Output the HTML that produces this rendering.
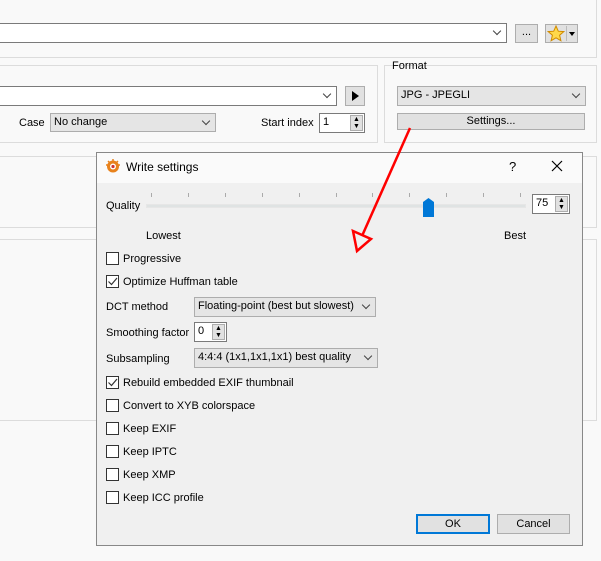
<!DOCTYPE html>
<html><head><meta charset="utf-8"><style>
*{box-sizing:border-box;margin:0;padding:0}
body{width:601px;height:561px;background:#f9f9f9;font:11px "Liberation Sans",Tahoma,sans-serif;color:#000;position:relative;overflow:hidden}
.a{position:absolute}
.panel{position:absolute;border:1px solid #dcdcdc}
.combo{position:absolute;border:1px solid #7a7a7a;background:#fff;padding:2px 3px;line-height:13px;white-space:nowrap;overflow:hidden}
.combo.g{background:#e5e5e5;border-color:#adadad}
.chev{position:absolute;right:6px;top:4px;width:6px;height:6px;border-right:1px solid #444;border-bottom:1px solid #444;transform:rotate(45deg)}
.btn{position:absolute;background:#e1e1e1;border:1px solid #adadad;text-align:center;line-height:15px}
.cb{position:absolute;left:106px;width:13px;height:13px;border:1px solid #333;background:#fff}
.cl{position:absolute;left:123px}
.spin{position:absolute;border:1px solid #7a7a7a;background:#fff;padding:1px 3px;line-height:15px}
.sb{position:absolute;right:1px;top:1px;bottom:1px;width:13px;background:#e1e1e1;border:1px solid #adadad;font-size:7px;line-height:7px;text-align:center}
.tick{position:absolute;top:193px;width:1px;height:4px;background:#aaa}
</style></head><body>
<div class="panel" style="left:-1px;top:-1px;width:598px;height:59px"></div>
<div class="combo" style="left:-2px;top:23px;width:509px;height:20px"><span class="chev"></span></div>
<div class="btn" style="left:515px;top:24px;width:23px;height:19px;line-height:14px">...</div>
<div class="btn" style="left:545px;top:24px;width:33px;height:19px"><svg class="a" style="left:1px;top:0px" width="18" height="17" viewBox="0 0 18 17"><path d="M9 1L11.3 6.2L16.8 6.6L12.6 10.2L13.9 15.7L9 12.8L4.1 15.7L5.4 10.2L1.2 6.6L6.7 6.2Z" fill="#ffd84a" stroke="#d08a00" stroke-width="1"/></svg><span class="a" style="left:20px;top:1px;width:1px;height:15px;background:#bbb"></span><span class="a" style="left:23px;top:7px;border:3.5px solid transparent;border-top:4px solid #000"></span></div>

<div class="panel" style="left:-1px;top:65px;width:379px;height:78px"></div>
<div class="panel" style="left:384px;top:65px;width:213px;height:78px"></div>
<div class="a" style="left:392px;top:60px">Format</div>
<div class="combo" style="left:-2px;top:86px;width:339px;height:20px"><span class="chev"></span></div>
<div class="btn" style="left:345px;top:86px;width:20px;height:20px"><span class="a" style="left:6px;top:4px;border:5px solid transparent;border-left:7px solid #000"></span></div>
<div class="a" style="left:19px;top:117px">Case</div>
<div class="combo g" style="left:50px;top:113px;width:166px;height:19px">No change<span class="chev"></span></div>
<div class="a" style="left:261px;top:117px">Start index</div>
<div class="spin" style="left:319px;top:113px;width:46px;height:20px">1<div class="sb">▲<br>▼</div></div>
<div class="combo g" style="left:397px;top:86px;width:189px;height:20px">JPG - JPEGLI<span class="chev"></span></div>
<div class="btn" style="left:397px;top:113px;width:188px;height:17px;line-height:15px">Settings...</div>

<div class="panel" style="left:-1px;top:156px;width:598px;height:72px"></div>
<div class="panel" style="left:-1px;top:239px;width:598px;height:182px"></div>

<div class="a" style="left:96px;top:152px;width:487px;height:394px;border:1px solid #888;background:#f0f0f0"></div>
<div class="a" style="left:97px;top:153px;width:485px;height:30px;background:#fafafa"></div>
<svg class="a" style="left:105px;top:158px" width="16" height="16" viewBox="0 0 16 16"><circle cx="8" cy="8.5" r="6" fill="#e8821c"/><circle cx="8" cy="8.5" r="3" fill="#fff"/><circle cx="8" cy="8.5" r="1.6" fill="#c33"/><path d="M3 3l2 2M13 3l-2 2M8 1v2M1 7h2M15 7h-2" stroke="#e8821c" stroke-width="1.5"/></svg>
<div class="a" style="left:126px;top:160px;font-size:12px">Write settings</div>
<div class="a" style="left:509px;top:159px;font-size:13px">?</div>
<svg class="a" style="left:551px;top:160px" width="12" height="12"><path d="M1 1L11 11M11 1L1 11" stroke="#000" stroke-width="1.2"/></svg>

<div class="a" style="left:106px;top:200px">Quality</div>
<div class="a" style="left:146px;top:204px;width:380px;height:4px;background:#dfe3e3;border:1px solid #e6e6e6"></div>
<div class="tick" style="left:151px"></div><div class="tick" style="left:188px"></div><div class="tick" style="left:225px"></div><div class="tick" style="left:262px"></div><div class="tick" style="left:299px"></div><div class="tick" style="left:336px"></div><div class="tick" style="left:372px"></div><div class="tick" style="left:409px"></div><div class="tick" style="left:446px"></div><div class="tick" style="left:483px"></div><div class="tick" style="left:520px"></div>
<svg class="a" style="left:423px;top:198px" width="11" height="19"><path d="M0 4L5.5 0L11 4V19H0Z" fill="#0078d7"/></svg>
<div class="spin" style="left:532px;top:194px;width:38px;height:20px">75<div class="sb">▲<br>▼</div></div>
<div class="a" style="left:146px;top:230px">Lowest</div>
<div class="a" style="left:504px;top:230px">Best</div>

<div class="cb" style="top:252px"></div><div class="cl" style="top:253px">Progressive</div>
<div class="cb" style="top:275px"><svg width="11" height="11" class="a"><path d="M1.5 5.5L4.5 8.5L10 2" stroke="#333" fill="none" stroke-width="1.2"/></svg></div><div class="cl" style="top:276px">Optimize Huffman table</div>
<div class="a" style="left:106px;top:301px">DCT method</div>
<div class="combo g" style="left:194px;top:297px;width:182px;height:20px">Floating-point (best but slowest)<span class="chev"></span></div>
<div class="a" style="left:106px;top:327px">Smoothing factor</div>
<div class="spin" style="left:194px;top:322px;width:33px;height:20px">0<div class="sb">▲<br>▼</div></div>
<div class="a" style="left:106px;top:353px">Subsampling</div>
<div class="combo g" style="left:194px;top:348px;width:184px;height:20px">4:4:4 (1x1,1x1,1x1) best quality<span class="chev"></span></div>
<div class="cb" style="top:376px"><svg width="11" height="11" class="a"><path d="M1.5 5.5L4.5 8.5L10 2" stroke="#333" fill="none" stroke-width="1.2"/></svg></div><div class="cl" style="top:377px">Rebuild embedded EXIF thumbnail</div>
<div class="cb" style="top:399px"></div><div class="cl" style="top:400px">Convert to XYB colorspace</div>
<div class="cb" style="top:422px"></div><div class="cl" style="top:423px">Keep EXIF</div>
<div class="cb" style="top:445px"></div><div class="cl" style="top:446px">Keep IPTC</div>
<div class="cb" style="top:468px"></div><div class="cl" style="top:469px">Keep XMP</div>
<div class="cb" style="top:491px"></div><div class="cl" style="top:492px">Keep ICC profile</div>
<div class="btn" style="left:416px;top:514px;width:74px;height:20px;border:2px solid #0078d7;line-height:16px">OK</div>
<div class="btn" style="left:497px;top:514px;width:73px;height:20px;line-height:18px">Cancel</div>

<svg class="a" style="left:0;top:0" width="601" height="561"><path d="M410 128L362 236" stroke="#f00" stroke-width="2.5" fill="none"/><path d="M353 231L371 239L357 251Z" stroke="#f00" stroke-width="2.5" fill="none"/></svg>
</body></html>
